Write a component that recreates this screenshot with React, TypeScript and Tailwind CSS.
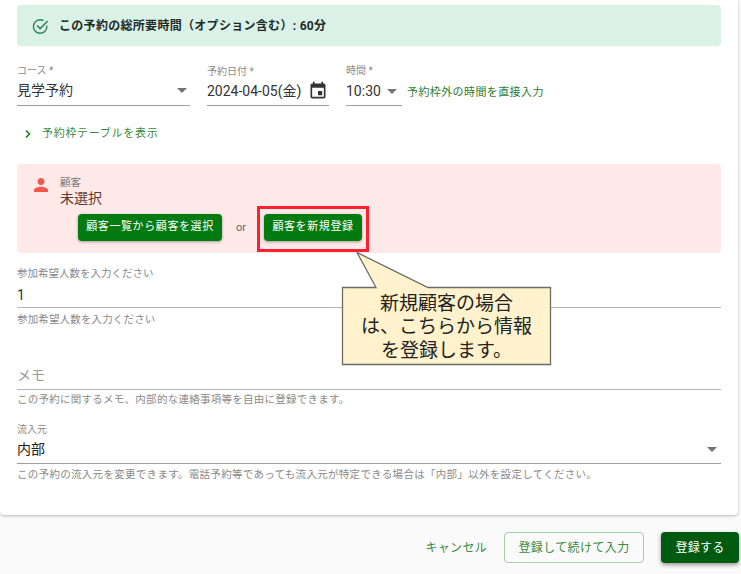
import React from "react";

const font = { fontFamily: 'Roboto, "Noto Sans CJK JP", sans-serif' };

function Caret() {
  return <span className="block w-0 h-0 mt-[1px] border-l-[5px] border-r-[5px] border-t-[5px] border-l-transparent border-r-transparent border-t-[#757575]" />;
}

export default function App() {
  return (
    <div style={font} className="relative w-[741px] h-[574px] overflow-hidden bg-[#fafafa] font-['Roboto','Noto_Sans_CJK_JP',sans-serif]">
      <div className="w-[738px] h-[515px] bg-white rounded-b-[4px] shadow-[0_1px_3px_rgba(0,0,0,0.25)] px-[17px] pt-[5px]">
        <div className="w-[704px] h-[41px] rounded bg-[#d9f1e6] flex items-center pl-[15px] gap-[10px]">
          <svg width="17" height="17" viewBox="0 0 24 24" fill="none" stroke="#2e7d5b" strokeWidth="2" strokeLinecap="round" strokeLinejoin="round" className="mt-[1px]">
            <path d="M21 11.5A9.5 9.5 0 1 1 15.5 3.4" />
            <path d="M7.5 11l4 4L21.5 5" />
          </svg>
          <span className="mt-[1px] text-[12px] tracking-[0.3px] font-bold text-[#1e2b26] leading-none whitespace-nowrap">この予約の総所要時間（オプション含む）: 60分</span>
        </div>

        <div className="flex items-end h-[60px]">
          <div className="w-[173px] border-b border-[#9e9e9e] h-[46px] flex flex-col">
            <span className="text-[10px] leading-[12px] mt-[5px] text-[#8a8a8a]">コース *</span>
            <div className="flex items-center justify-between mt-[3px] pr-[3px]">
              <span className="text-[14px] leading-[20px] text-[#333]">見学予約</span>
              <Caret />
            </div>
          </div>
          <div className="w-[122px] ml-[17px] border-b border-[#9e9e9e] h-[46px] flex flex-col">
            <span className="text-[10px] leading-[12px] mt-[6px] text-[#8a8a8a]">予約日付 *</span>
            <div className="flex items-center justify-between mt-[2px] pr-[1px]">
              <span className="text-[14px] leading-[22px] text-[#333] whitespace-nowrap">2024-04-05(金)</span>
              <svg width="20" height="20" viewBox="0 0 24 24" fill="#333">
                <path d="M17 12h-5v5h5v-5zM16 1v2H8V1H6v2H5c-1.11 0-2 .9-2 2v14c0 1.1.89 2 2 2h14c1.1 0 2-.9 2-2V5c0-1.1-.9-2-2-2h-1V1h-2zm3 18H5V8h14v11z" />
              </svg>
            </div>
          </div>
          <div className="w-[56px] ml-[17px] border-b border-[#9e9e9e] h-[46px] flex flex-col">
            <span className="text-[10px] leading-[12px] mt-[5px] text-[#8a8a8a]">時間 *</span>
            <div className="flex items-center justify-between mt-[3px] pr-[5px]">
              <span className="text-[14px] leading-[22px] text-[#333]">10:30</span>
              <Caret />
            </div>
          </div>
          <span className="ml-[5px] mb-[6px] text-[11px] leading-[14px] tracking-[0.4px] text-[#2e7d32] whitespace-nowrap">予約枠外の時間を直接入力</span>
        </div>

        <div className="flex items-center h-[16px] mt-[20px] pl-[7px]">
          <svg width="8" height="10" viewBox="0 0 8 10" fill="none" stroke="#1b7d1f" strokeWidth="1.6">
            <path d="M2 1.5 5.5 5 2 8.5" />
          </svg>
          <span className="ml-[10px] text-[11px] leading-[14px] tracking-[0.7px] text-[#3a8a3f] whitespace-nowrap">予約枠テーブルを表示</span>
        </div>

        <div className="w-[704px] h-[89px] mt-[22px] rounded bg-[#fde9e7] pt-[12px] pl-[17px]">
          <div className="flex">
            <svg width="14" height="16" viewBox="4 4 16 16" fill="#f4554d" className="mt-[1px]">
              <path d="M12 12c2.21 0 4-1.79 4-4s-1.79-4-4-4-4 1.79-4 4 1.79 4 4 4zm0 2c-2.67 0-8 1.34-8 4v2h16v-2c0-2.66-5.33-4-8-4z" />
            </svg>
            <div className="ml-[12px] flex flex-col">
              <span className="text-[10.5px] leading-[14px] text-[#777]">顧客</span>
              <span className="text-[14px] leading-[16px] text-[#5d3a36]">未選択</span>
            </div>
          </div>
          <div className="flex items-center ml-[44px] mt-[8px]">
            <span className="w-[144px] h-[27px] rounded bg-[#047b10] shadow-[0_1px_3px_rgba(0,0,0,0.35)] text-white text-[11px] tracking-[0.6px] flex items-center justify-center whitespace-nowrap">顧客一覧から顧客を選択</span>
            <span className="w-[42px] pr-[4px] pt-[1px] text-center text-[11px] text-[#666]">or</span>
            <span className="w-[98px] h-[27px] rounded bg-[#047b10] shadow-[0_1px_3px_rgba(0,0,0,0.35)] text-white text-[11px] tracking-[0.6px] flex items-center justify-center whitespace-nowrap">顧客を新規登録</span>
          </div>
        </div>

        <div className="w-[704px] mt-[15px] border-b border-[#b5b5b5] h-[40px] flex flex-col">
          <span className="text-[10.5px] leading-[12px] text-[#8a8a8a]">参加希望人数を入力ください</span>
          <span className="text-[14px] leading-[20px] mt-[5px] text-[#333]">1</span>
        </div>
        <p className="text-[10.5px] leading-[14px] mt-[5px] tracking-[0.15px] text-[#8a8a8a]">参加希望人数を入力ください</p>

        <div className="w-[704px] mt-[38px] border-b border-[#b5b5b5] h-[25px] flex items-start">
          <span className="text-[14px] leading-[20px] text-[#9a9a9a]">メモ</span>
        </div>
        <p className="text-[10.5px] leading-[14px] mt-[3px] tracking-[0.26px] text-[#8a8a8a]">この予約に関するメモ、内部的な連絡事項等を自由に登録できます。</p>

        <div className="w-[704px] mt-[16px] border-b border-[#9e9e9e] h-[41px] flex flex-col">
          <span className="text-[10px] leading-[12px] mt-[1px] text-[#8a8a8a]">流入元</span>
          <div className="flex items-center justify-between mt-[3px] pr-[4px]">
            <span className="text-[14px] leading-[20px] text-[#222]">内部</span>
            <Caret />
          </div>
        </div>
        <p className="text-[10.5px] leading-[14px] mt-[4px] tracking-[0.3px] text-[#8a8a8a] whitespace-nowrap">この予約の流入元を変更できます。電話予約等であっても流入元が特定できる場合は「内部」以外を設定してください。</p>
      </div>

      <div className="flex items-center justify-end h-[31px] mt-[17px] pr-[2px]">
        <span className="text-[12px] tracking-[0.3px] text-[#3a8a3f] whitespace-nowrap">キャンセル</span>
        <span className="ml-[17px] w-[140px] h-[31px] rounded border border-[#a5d0a8] text-[12px] tracking-[0.4px] text-[#3a8a3f] flex items-center justify-center whitespace-nowrap">登録して続けて入力</span>
        <span className="ml-[17px] w-[78px] h-[31px] rounded bg-[#005a10] shadow-[0_2px_4px_rgba(0,0,0,0.4)] text-[12px] tracking-[0.3px] text-white flex items-center justify-center whitespace-nowrap">登録する</span>
      </div>

      {/* Annotation overlay */}
      <div className="absolute left-[257px] top-[206px] w-[112px] h-[46px] border-[3px] border-[#ff1f2d]" />
      <svg className="absolute left-[340px] top-[250px]" width="214" height="116" viewBox="340 250 214 116">
        <path d="M342.5 287.5H376L357 252.5L428 287.5H550.5V364.5H342.5Z" fill="#fff2cc" stroke="#6b6b6b" strokeWidth="1.3" />
      </svg>
      <div className="absolute left-[343px] top-[290px] w-[207px] h-[74px] flex flex-col items-center justify-center text-[19px] leading-[23.5px] text-[#222] whitespace-nowrap">
        <span>新規顧客の場合</span>
        <span>は、こちらから情報</span>
        <span>を登録します。</span>
      </div>
    </div>
  );
}
